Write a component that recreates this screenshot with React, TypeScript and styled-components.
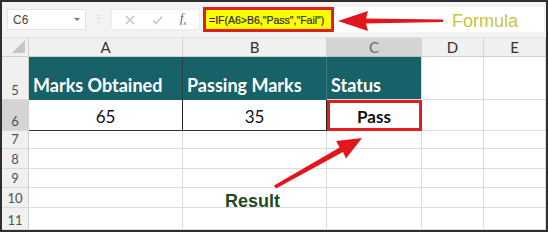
import React from "react";
import styled, { createGlobalStyle } from "styled-components";

const GlobalStyle = createGlobalStyle`
  html, body {
    margin: 0;
    padding: 0;
    background: #ffffff;
  }
  * {
    box-sizing: border-box;
  }
`;

const columns = [
  { key: "A", width: 154 },
  { key: "B", width: 144 },
  { key: "C", width: 95, selected: true },
  { key: "D", width: 62 },
  { key: "E", width: 62 },
];

const rows = [
  { num: 5, height: 43 },
  { num: 6, height: 31, selected: true },
  { num: 7, height: 18 },
  { num: 8, height: 20 },
  { num: 9, height: 19 },
  { num: 10, height: 20 },
  { num: 11, height: 22 },
];

const Frame = styled.div`
  position: relative;
  width: 548px;
  height: 232px;
  border: 2px solid #2e2e2e;
  background: #ffffff;
  overflow: hidden;
  font-family: "Liberation Sans", Arial, sans-serif;
`;

const Toolbar = styled.div`
  height: 36px;
  display: flex;
  align-items: center;
  padding: 0 2px 0 5px;
  background: #f3f3f3;
  border-bottom: 1px solid #e2e2e2;
`;

const NameBox = styled.div`
  width: 79px;
  height: 21px;
  background: #ffffff;
  border: 1px solid #e4e4e4;
  display: flex;
  align-items: center;
  justify-content: space-between;
  padding: 0 5px 0 5px;
  font-size: 12px;
  color: #444;
`;

const Caret = styled.span`
  width: 0;
  height: 0;
  border-left: 3px solid transparent;
  border-right: 3px solid transparent;
  border-top: 3px solid #777;
`;

const Dots = styled.div`
  width: 25px;
  text-align: center;
  color: #c0c0c0;
  font-size: 11px;
`;

const FnBox = styled.div`
  width: 89px;
  height: 21px;
  background: #ffffff;
  border: 1px solid #ececec;
  display: flex;
  align-items: center;
  justify-content: space-around;
  padding: 0 4px;
`;

const FxLabel = styled.span`
  font-family: "Liberation Serif", serif;
  font-style: italic;
  font-size: 12px;
  color: #555;
`;

const FormulaInput = styled.div`
  flex: 1;
  height: 25px;
  margin-left: 3px;
  background: #ffffff;
  display: flex;
  align-items: center;
`;

const Highlight = styled.div`
  height: 25px;
  width: 131px;
  background: #ffff00;
  border: 3px solid #e01e1e;
  display: flex;
  align-items: center;
  padding-left: 3px;
  font-size: 10.5px;
  color: #2b2b2b;
  white-space: nowrap;
  -webkit-text-stroke: 0.2px #2b2b2b;
`;

const Sheet = styled.div`
  display: grid;
  grid-template-columns: 27px ${columns.map((c) => `${c.width}px`).join(" ")};
  grid-template-rows: 19px ${rows.map((r) => `${r.height}px`).join(" ")};
`;

const Corner = styled.div`
  background: #f0f0f0;
  border-right: 1px solid #cfcfcf;
  border-bottom: 1px solid #cfcfcf;
  position: relative;
  &::after {
    content: "";
    position: absolute;
    right: 3px;
    bottom: 3px;
    width: 0;
    height: 0;
    border-left: 13px solid transparent;
    border-bottom: 13px solid #c6c6c6;
  }
`;

const ColHeader = styled.div<{ $selected?: boolean }>`
  background: ${(p) => (p.$selected ? "#d4d4d4" : "#f0f0f0")};
  border-right: 1px solid #d3d3d3;
  border-bottom: 1px solid ${(p) => (p.$selected ? "#bdbdbd" : "#cfcfcf")};
  display: flex;
  align-items: center;
  justify-content: center;
  font-family: "Lato", sans-serif;
  font-size: 15px;
  color: ${(p) => (p.$selected ? "#6a6a6a" : "#333")};
`;

const RowHeader = styled.div<{ $selected?: boolean }>`
  background: ${(p) => (p.$selected ? "#d4d4d4" : "#f0f0f0")};
  border-right: 1px solid #cfcfcf;
  border-bottom: 1px solid #dadada;
  display: flex;
  align-items: flex-end;
  justify-content: center;
  padding-bottom: 1px;
  font-family: "Lato", sans-serif;
  font-size: 13px;
  color: #505050;
`;

const Cell = styled.div<{
  $fill?: string;
  $align?: "left" | "center";
  $bold?: boolean;
  $color?: string;
  $right?: string;
  $bottom?: string;
  $outline?: boolean;
}>`
  background: ${(p) => p.$fill || "#ffffff"};
  border-right: 1px solid ${(p) => p.$right || "#dcdcdc"};
  border-bottom: 1px solid ${(p) => p.$bottom || "#dcdcdc"};
  display: flex;
  align-items: flex-end;
  justify-content: ${(p) => (p.$align === "center" ? "center" : "flex-start")};
  padding: 0 4px 3px;
  font-family: "Lato", sans-serif;
  font-size: ${(p) => (p.$bold ? "18px" : "17px")};
  font-weight: ${(p) => (p.$bold ? 700 : 400)};
  color: ${(p) => p.$color || "#111"};
  white-space: nowrap;
  ${(p) =>
    p.$outline &&
    `
    outline: 3px solid #e01e1e;
    outline-offset: -3px;
    font-size: 17px;
  `}
`;

const Annotation = styled.div<{ $x: number; $y: number; $color: string; $bold?: boolean }>`
  position: absolute;
  left: ${(p) => p.$x}px;
  top: ${(p) => p.$y}px;
  font-family: "Liberation Sans", Arial, sans-serif;
  font-size: 18px;
  font-weight: ${(p) => (p.$bold ? 700 : 400)};
  color: ${(p) => p.$color};
  white-space: nowrap;
`;

const ArrowLayer = styled.svg`
  position: absolute;
  left: -2px;
  top: -2px;
  width: 548px;
  height: 232px;
  pointer-events: none;
`;

const teal = "#176168";

type CellData = {
  text?: string;
  fill?: string;
  align?: "left" | "center";
  bold?: boolean;
  color?: string;
  right?: string;
  bottom?: string;
  outline?: boolean;
};

const data: Record<number, CellData[]> = {
  5: [
    { text: "Marks Obtained", fill: teal, bold: true, color: "#fff", right: "#2a3c3e", bottom: teal },
    { text: "Passing Marks", fill: teal, bold: true, color: "#fff", right: "#3f7a80", bottom: teal },
    { text: "Status", fill: teal, bold: true, color: "#fff", right: "#dcdcdc", bottom: "#dcdcdc" },
  ],
  6: [
    { text: "65", align: "center", right: "#222", bottom: "#333" },
    { text: "35", align: "center", right: "#222", bottom: "#333" },
    { text: "Pass", align: "center", bold: true, outline: true },
  ],
};

export default function App() {
  return (
    <>
      <GlobalStyle />
      <Frame>
        <Toolbar>
          <NameBox>
            C6
            <Caret />
          </NameBox>
          <Dots>⋮</Dots>
          <FnBox>
            <svg width="10" height="10" viewBox="0 0 10 10">
              <path d="M1 1 L9 9 M9 1 L1 9" stroke="#c2c2c2" strokeWidth="1.3" />
            </svg>
            <svg width="11" height="10" viewBox="0 0 11 10">
              <path d="M1 5.5 L4 8.5 L10 1.5" stroke="#c2c2c2" strokeWidth="1.3" fill="none" />
            </svg>
            <FxLabel>
              f<sub style={{ fontSize: 7 }}>x</sub>
            </FxLabel>
          </FnBox>
          <FormulaInput>
            <Highlight>=IF(A6&gt;B6,"Pass","Fail")</Highlight>
          </FormulaInput>
        </Toolbar>
        <Sheet>
          <Corner />
          {columns.map((c) => (
            <ColHeader key={c.key} $selected={c.selected}>
              {c.key}
            </ColHeader>
          ))}
          {rows.map((r) => (
            <React.Fragment key={r.num}>
              <RowHeader $selected={r.selected}>{r.num}</RowHeader>
              {columns.map((c, i) => {
                const d = data[r.num]?.[i] || {};
                return (
                  <Cell
                    key={c.key}
                    $fill={d.fill}
                    $align={d.align}
                    $bold={d.bold}
                    $color={d.color}
                    $right={d.right}
                    $bottom={d.bottom}
                    $outline={d.outline}
                  >
                    {d.text}
                  </Cell>
                );
              })}
            </React.Fragment>
          ))}
        </Sheet>
        <Annotation $x={450} $y={9} $color="#c9c53a">
          Formula
        </Annotation>
        <Annotation $x={223} $y={189} $color="#1f4a1f" $bold>
          Result
        </Annotation>
        <ArrowLayer viewBox="0 0 548 232">
          <polygon
            points="338,21 368,11 366,18.5 443,19.5 443,22 366,23.5 368,31"
            fill="#e3161c"
          />
          <polygon
            points="362,138 346,158.5 343,152 276,188.5 274,185.5 339.5,147.5 336.2,141.1"
            fill="#e3161c"
          />
        </ArrowLayer>
      </Frame>
    </>
  );
}
